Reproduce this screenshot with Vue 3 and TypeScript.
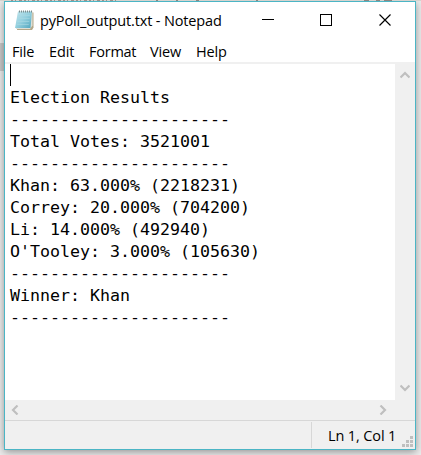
<script setup lang="ts">
interface MenuItem { label: string; cls: string }

const menus: MenuItem[] = [
  { label: 'File', cls: 'file' },
  { label: 'Edit', cls: 'edit' },
  { label: 'Format', cls: 'format' },
  { label: 'View', cls: 'view' },
  { label: 'Help', cls: 'help' },
]

const rule = '-'.repeat(22)
const lines: string[] = [
  '',
  'Election Results',
  rule,
  'Total Votes: 3521001',
  rule,
  'Khan: 63.000% (2218231)',
  'Correy: 20.000% (704200)',
  'Li: 14.000% (492940)',
  "O'Tooley: 3.000% (105630)",
  rule,
  'Winner: Khan',
  rule,
]
</script>

<template>
  <div class="desktop">
    <svg class="behind" width="421" height="1" viewBox="0 0 421 1">
      <path d="M0 .5h421" stroke="#d6d3ce" />
      <path d="M11 .5h105" stroke="#a09088" stroke-dasharray="2 2 1 3 3 2" />
      <path d="M156 .5h2M176 .5h2M196 .5h3M256 .5h2M364 .5h5M376 .5h4M384 .5h8" stroke="#8e8580" />
    </svg>
    <div class="window">
      <header class="titlebar">
        <svg class="app-icon" width="21" height="22" viewBox="0 0 21 22">
          <defs>
            <linearGradient id="pad" x1="0" y1="0" x2="1" y2="1">
              <stop offset="0" stop-color="#c3e6ee" />
              <stop offset=".5" stop-color="#93cfde" />
              <stop offset="1" stop-color="#4fa5bd" />
            </linearGradient>
          </defs>
          <path d="M5 3.500h14.500v15l-1.500 2.500H3z" fill="#b3a789" />
          <path d="M4 2.500h14.500v14l-2.500 3.500H2z" fill="#dedfd6" />
          <path d="M4 2.500h14l-1.500 16.500H1z" fill="url(#pad)" />
          <path d="M4 6.500h12M3.700 9.500h12M3.300 12.500h12M2.800 15.500h12" stroke="#a9d8e3" stroke-width=".6" />
          <path d="M5 2.500h13" stroke="#7b8d90" stroke-width="2" stroke-dasharray="1 1" />
        </svg>
        <span class="title">pyPoll_output.txt - Notepad</span>
        <svg class="controls" width="130" height="14" viewBox="0 0 130 14" fill="none" stroke="#000">
          <path d="M0 6.500h12" />
          <rect x="58.500" y="1.500" width="11" height="11" />
          <path d="M117.500 1.500l11 11M128.500 1.500l-11 11" stroke-width="1.150" />
        </svg>
      </header>
      <nav class="menubar">
        <span v-for="m in menus" :key="m.label" class="menu" :class="m.cls">{{ m.label }}</span>
      </nav>
      <div class="editor">
        <div class="text">
          <div v-for="(line, i) in lines" :key="i" class="line"><i v-if="i === 0" class="caret"></i>{{ line }}</div>
        </div>
        <div class="vscroll">
          <svg width="10" height="8" viewBox="0 0 10 8"><path d="M.5 6.500L5 2l4.500 4.500" /></svg>
          <svg width="10" height="8" viewBox="0 0 10 8"><path d="M.5 1.500L5 6l4.500-4.500" /></svg>
        </div>
      </div>
      <div class="hscroll">
        <svg width="8" height="10" viewBox="0 0 8 10"><path d="M6.500.5L2 5l4.500 4.500" /></svg>
        <svg width="8" height="10" viewBox="0 0 8 10"><path d="M1.500.5L6 5l-4.500 4.500" /></svg>
      </div>
      <footer class="status">
        <div class="cell"><span>Ln 1, Col 1</span></div>
        <svg class="grip" width="11" height="11" viewBox="0 0 11 11" fill="#bfbfbf">
          <path d="M8 0h3v3H8zM4 4h3v3H4zM8 4h3v3H8zM0 8h3v3H0zM4 8h3v3H4zM8 8h3v3H8z" />
        </svg>
      </footer>
    </div>
  </div>
</template>

<style>
body { overflow: hidden; }
</style>

<style scoped>
.desktop {
  box-sizing: border-box;
  position: relative;
  width: 421px;
  height: 455px;
  padding: 1px 5px 5px 4px;
  overflow: hidden;
  background: linear-gradient(#c9c9c9, #c9c9c9) 0 43px / 4px 28px no-repeat, #ececec;
}
.behind { position: absolute; left: 0; top: 0; display: block; }
.window {
  box-sizing: border-box;
  width: 412px;
  height: 449px;
  display: flex;
  flex-direction: column;
  border: 1px solid #4bb5c5;
  background: #fff;
  box-shadow: 0 2px 8px rgba(0, 0, 0, .38);
  font-family: "Open Sans", "Noto Sans", sans-serif;
  color: #000;
}
.titlebar {
  display: flex;
  height: 37px;
  align-items: flex-start;
}
.app-icon { margin: 7px 0 0 9px; flex: none; }
.title {
  width: 221px;
  margin: 7px 0 0 5px;
  font-size: 14.500px;
  line-height: 23px;
  letter-spacing: -.15px;
  white-space: nowrap;
}
.controls { margin: 11px 0 0 1px; flex: none; }
.menubar {
  box-sizing: border-box;
  height: 25px;
  display: flex;
  padding-left: 7px;
  border-bottom: 2px solid #f0f0f0;
  font-size: 14.500px;
  line-height: 25px;
  letter-spacing: -.15px;
}
.menu { flex: none; white-space: nowrap; }
.file { width: 37px; }
.edit { width: 40px; }
.format { width: 61px; letter-spacing: -.25px; }
.view { width: 46px; }
.editor { display: flex; height: 336px; }
.text {
  flex: 1;
  padding-left: 5px;
  font-family: "DejaVu Sans Mono", monospace;
  font-size: 16.610px;
}
.line {
  height: 22px;
  line-height: 24px;
  white-space: pre;
}
.caret {
  display: block;
  width: 1px;
  height: 22px;
  background: #000;
}
.vscroll {
  box-sizing: border-box;
  width: 20px;
  display: flex;
  flex-direction: column;
  justify-content: space-between;
  align-items: center;
  padding: 7px 0 8px;
  background: #f0f0f0;
}
.vscroll svg, .hscroll svg { fill: none; stroke: #bfbfbf; stroke-width: 2.200; }
.hscroll {
  box-sizing: border-box;
  height: 20px;
  display: flex;
  justify-content: space-between;
  align-items: center;
  padding: 0 28px 1px 6px;
  background: #f0f0f0;
}
.status {
  box-sizing: border-box;
  height: 29px;
  display: flex;
  justify-content: flex-end;
  align-items: flex-start;
  border-top: 1px solid #d7d7d7;
  background: #f0f0f0;
}
.cell {
  box-sizing: border-box;
  width: 91px;
  height: 26px;
  margin-top: 1px;
  padding-left: 16px;
  border-left: 1px solid #d7d7d7;
  font-size: 14.500px;
  line-height: 28px;
  letter-spacing: -.12px;
  white-space: nowrap;
}
.grip { margin: 15px 2px 0 0; flex: none; }
</style>
